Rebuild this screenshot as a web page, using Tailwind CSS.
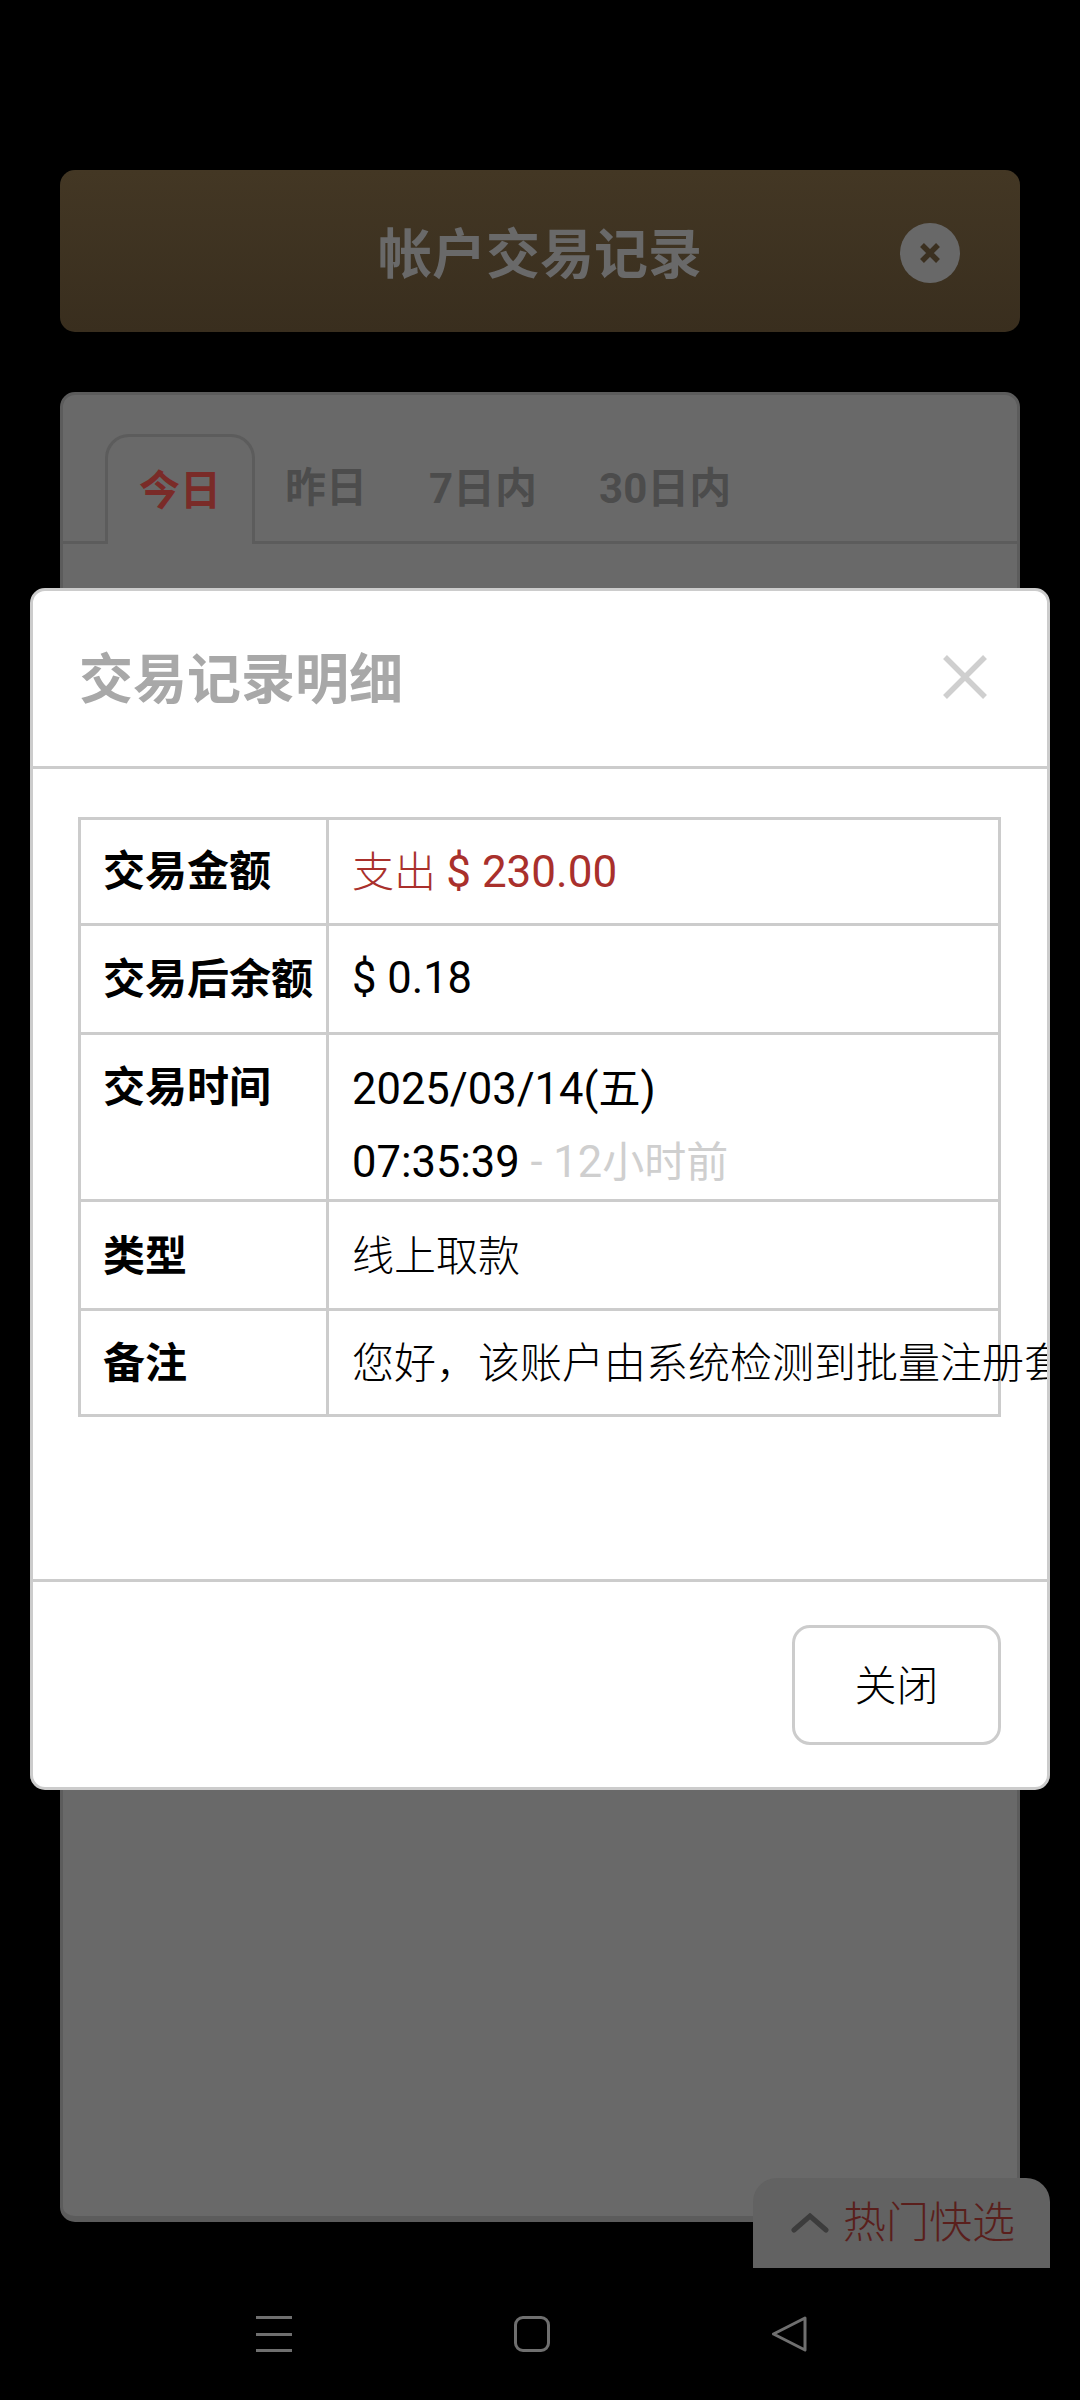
<!DOCTYPE html>
<html lang="zh-CN">
<head>
    <meta charset="UTF-8">
    <meta name="viewport" content="width=device-width, initial-scale=1.0">
    <title>帐户交易记录</title>
    <script src="https://cdn.jsdelivr.net/npm/@tailwindcss/browser@4"></script>
</head>
<body class="bg-black font-['Roboto','Noto_Sans_CJK_SC',sans-serif]">
    <div class="relative w-[1080px] h-[2400px] overflow-hidden flex flex-col">
        <!-- Page behind the modal, already dimmed -->
        <div class="relative h-[2268px] shrink-0 px-[60px] pt-[170px]">
            <div class="relative h-[162px] rounded-[15px] bg-gradient-to-b from-[#433724] to-[#392e1e] flex items-center justify-center">
                <h1 class="pt-[10px] text-[54px] leading-none font-bold text-[#696969]">帐户交易记录</h1>
                <div class="absolute right-[60px] top-[53px] w-[60px] h-[60px] rounded-full bg-[#686868] flex items-center justify-center">
                    <svg width="24" height="24" viewBox="0 0 24 24" fill="none" stroke="#3b3020" stroke-width="5.5"><path d="M4 4 20 20M20 4 4 20"/></svg>
                </div>
            </div>

            <div class="mt-[60px] h-[1830px] rounded-[15px] bg-[#696969] border-[3px] border-[#5c5c5c] border-b-[6px] pt-[39px]">
                <div class="flex h-[110px] pl-[42px] border-b-[3px] border-[#5c5c5c]">
                    <div class="h-[110px] pt-[2px] px-[31px] border-[3px] border-b-0 border-[#5c5c5c] rounded-t-[24px] bg-[#696969] text-[#7a2b28] text-[41px] font-bold flex items-center">今日</div>
                    <div class="pt-[2px] px-[30px] mr-[4px] text-[#4c4c4c] text-[41px] font-bold flex items-center">昨日</div>
                    <div class="pt-[2px] px-[28px] mr-[6px] text-[#4c4c4c] text-[42px] font-bold flex items-center">7日内</div>
                    <div class="pt-[2px] px-[28px] text-[#4c4c4c] text-[42px] font-bold flex items-center">30日内</div>
                </div>
            </div>

            <!-- Quick select tab -->
            <div class="absolute right-[30px] bottom-0 w-[297px] h-[90px] rounded-t-[24px] bg-[#626262] flex items-center pl-[38px] gap-[14px]">
                <svg width="38" height="20" viewBox="0 0 38 20" fill="none" stroke="#3c3c3c" stroke-width="5" stroke-linecap="round"><path d="M3 17 19 3 35 17"/></svg>
                <span class="text-[43px] leading-none font-light text-[#5a1f1c]">热门快选</span>
            </div>
        </div>

        <!-- Android navigation bar -->
        <div class="flex-1 bg-black pt-[48px] pl-[256px] flex items-start">
            <div class="w-[36px] h-[36px] flex flex-col justify-between">
                <div class="h-[3px] bg-[#6f6f6f]"></div>
                <div class="h-[3px] bg-[#6f6f6f]"></div>
                <div class="h-[3px] bg-[#6f6f6f]"></div>
            </div>
            <div class="ml-[222px] w-[36px] h-[36px] rounded-[9px] border-[3px] border-[#6f6f6f]"></div>
            <svg class="ml-[222px]" width="36" height="36" viewBox="0 0 36 36" fill="none" stroke="#6f6f6f" stroke-width="3" stroke-linejoin="round"><path d="M33 2 1.5 18 33 34Z"/></svg>
        </div>

        <!-- Modal -->
        <div class="absolute left-[30px] top-[588px] w-[1020px] h-[1202px] bg-white border-[3px] border-[#cccccc] rounded-[15px] overflow-hidden flex flex-col">
            <div class="h-[178px] shrink-0 border-b-[3px] border-[#cccccc] pl-[46px] pr-[60px] flex items-center justify-between">
                <h2 class="pt-[5px] text-[54px] leading-none font-bold text-[#a8a8a8]">交易记录明细</h2>
                <svg class="mb-[4px]" width="44" height="44" viewBox="0 0 44 44" fill="none" stroke="#cfcfcf" stroke-width="5.5"><path d="M2 2 42 42M42 2 2 42"/></svg>
            </div>

            <div class="h-[813px] shrink-0 border-b-[3px] border-[#cccccc] pt-[48px] pl-[45px]">
                <table class="table-fixed border-collapse w-[923px] text-[42px] text-black">
                    <tbody>
                        <tr class="h-[106px]">
                            <th class="w-[248px] border-[3px] border-[#cccccc] pl-[22px] text-left font-bold">交易金额</th>
                            <td class="border-[3px] border-[#cccccc] pl-[23px] text-[#a9302c] font-light">支出 <span class="text-[44px] font-normal">$ 230.00</span></td>
                        </tr>
                        <tr class="h-[109px]">
                            <th class="border-[3px] border-[#cccccc] pl-[22px] text-left font-bold whitespace-nowrap">交易后余额</th>
                            <td class="border-[3px] border-[#cccccc] pl-[23px] text-[43.5px]">$ 0.18</td>
                        </tr>
                        <tr class="h-[167px]">
                            <th class="border-[3px] border-[#cccccc] pl-[22px] pt-[16px] align-top text-left font-bold leading-[74px]">交易时间</th>
                            <td class="border-[3px] border-[#cccccc] pl-[23px] pt-[18px] align-top leading-[73px] text-[43.5px]">2025/03/14(<span class="text-[42px] leading-none">五</span>)<br>07:35:39 <span class="text-[#cfcfcf] leading-none">- 12<span class="text-[42px] leading-none">小时前</span></span></td>
                        </tr>
                        <tr class="h-[109px]">
                            <th class="border-[3px] border-[#cccccc] pl-[22px] pt-[2px] text-left font-bold">类型</th>
                            <td class="border-[3px] border-[#cccccc] pl-[23px] pt-[2px] font-light">线上取款</td>
                        </tr>
                        <tr class="h-[106px]">
                            <th class="border-[3px] border-[#cccccc] pl-[22px] pt-[2px] text-left font-bold">备注</th>
                            <td class="border-[3px] border-[#cccccc] pl-[23px] pt-[2px] font-light whitespace-nowrap">您好，该账户由系统检测到批量注册套</td>
                        </tr>
                    </tbody>
                </table>
            </div>

            <div class="flex-1 flex justify-end items-start pt-[43px] pr-[46px]">
                <button class="w-[209px] h-[120px] pt-[3px] rounded-[18px] border-[3px] border-[#cccccc] text-[42px] font-light text-black">关闭</button>
            </div>
        </div>
    </div>
</body>
</html>
